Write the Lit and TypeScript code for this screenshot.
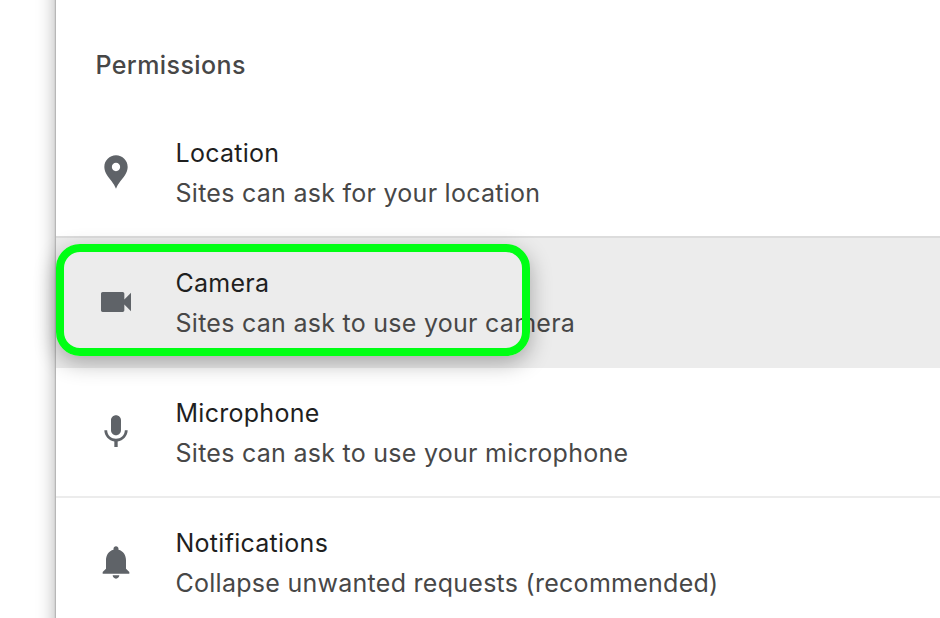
import { LitElement, html, css, svg } from "lit";
import { customElement } from "lit/decorators.js";

const icons: Record<string, string> = {
  location: "M12 2C8.130 2 5 5.130 5 9c0 1.700.65 3.300 1.650 4.900C8.500 16.700 10.600 18.500 12 22c1.400-3.500 3.500-5.300 5.350-8.100C18.350 12.300 19 10.700 19 9c0-3.870-3.130-7-7-7zm0 9.500c-1.380 0-2.500-1.120-2.500-2.500s1.120-2.500 2.500-2.500 2.500 1.120 2.500 2.500-1.120 2.500-2.500 2.500z",
  camera: "M17 10.500V7c0-.55-.45-1-1-1H4c-.55 0-1 .45-1 1v10c0 .55.45 1 1 1h12c.55 0 1-.45 1-1v-3.500l4 4v-11l-4 4z",
  microphone: "M12 14c1.660 0 2.990-1.340 2.990-3L15 5c0-1.660-1.340-3-3-3S9 3.340 9 5v6c0 1.660 1.340 3 3 3zm5.300-3c0 3-2.540 5.100-5.300 5.100S6.700 14 6.700 11H5c0 3.410 2.720 6.230 6 6.720V21h2v-3.280c3.280-.48 6-3.300 6-6.720h-1.700z",
  notifications: "M12 22c1.100 0 2-.9 2-2h-4c0 1.100.89 2 2 2zm6-6v-5c0-3.070-1.640-5.640-4.500-6.320V4c0-.83-.67-1.500-1.500-1.500s-1.500.67-1.500 1.500v.68C7.630 5.360 6 7.920 6 11v5l-2 2v1h16v-1l-2-2z",
};
const rows = [
  ["location", "Location", "Sites can ask for your location"],
  ["camera", "Camera", "Sites can ask to use your camera"],
  ["microphone", "Microphone", "Sites can ask to use your microphone"],
  ["notifications", "Notifications", "Collapse unwanted requests (recommended)"],
];

@customElement("app-root")
export class AppRoot extends LitElement {
  static styles = css`
    :host { display: block; height: 618px; overflow: hidden; background: #fff; font-family: Inter, sans-serif; }
    .panel { margin: -30px 0 0 56px; padding: 30px 0; height: 618px; box-shadow: 0 0 2px rgba(0,0,0,.45), 0 0 18px rgba(0,0,0,.33); }
    h2 { margin: 0; height: 106px; padding: 48px 0 0 39.5px; box-sizing: border-box; font-size: 25px; line-height: 34px; font-weight: 500; letter-spacing: .4px; color: #474747; }
    .row { position: relative; display: flex; align-items: center; height: 130px; box-sizing: border-box; padding-left: 40px; border-top: 2px solid #ececec; }
    .row.location { border-color: transparent; }
    .row.camera { z-index: 1; background: #ececec; border-color: #dcdcdc; }
    .icon { width: 40px; height: 40px; margin-right: 39.5px; fill: #5f6368; }
    .text { padding-top: 2px; font-size: 25px; line-height: 40px; letter-spacing: .27px; white-space: nowrap; color: #474747; }
    .name { color: #1f1f1f; }
    .highlight { position: absolute; left: 0; top: 6px; width: 474px; height: 112px; box-sizing: border-box; border: 8px solid #00ff14; border-radius: 24px; box-shadow: 0 7px 22px rgba(0,0,0,.3); }
  `;
  render() {
    return html`<main class="panel"><h2>Permissions</h2>
      ${rows.map(([id, name, detail]) => html`<section class="row ${id}">
        <svg class="icon" viewBox="0 0 24 24">${svg`<path d=${icons[id]}></path>`}</svg>
        <div class="text"><div class="name"><span>${name}</span></div><div><span>${detail}</span></div></div>
        ${id === "camera" ? html`<div class="highlight"></div>` : ""}
      </section>`)}</main>`;
  }
}
